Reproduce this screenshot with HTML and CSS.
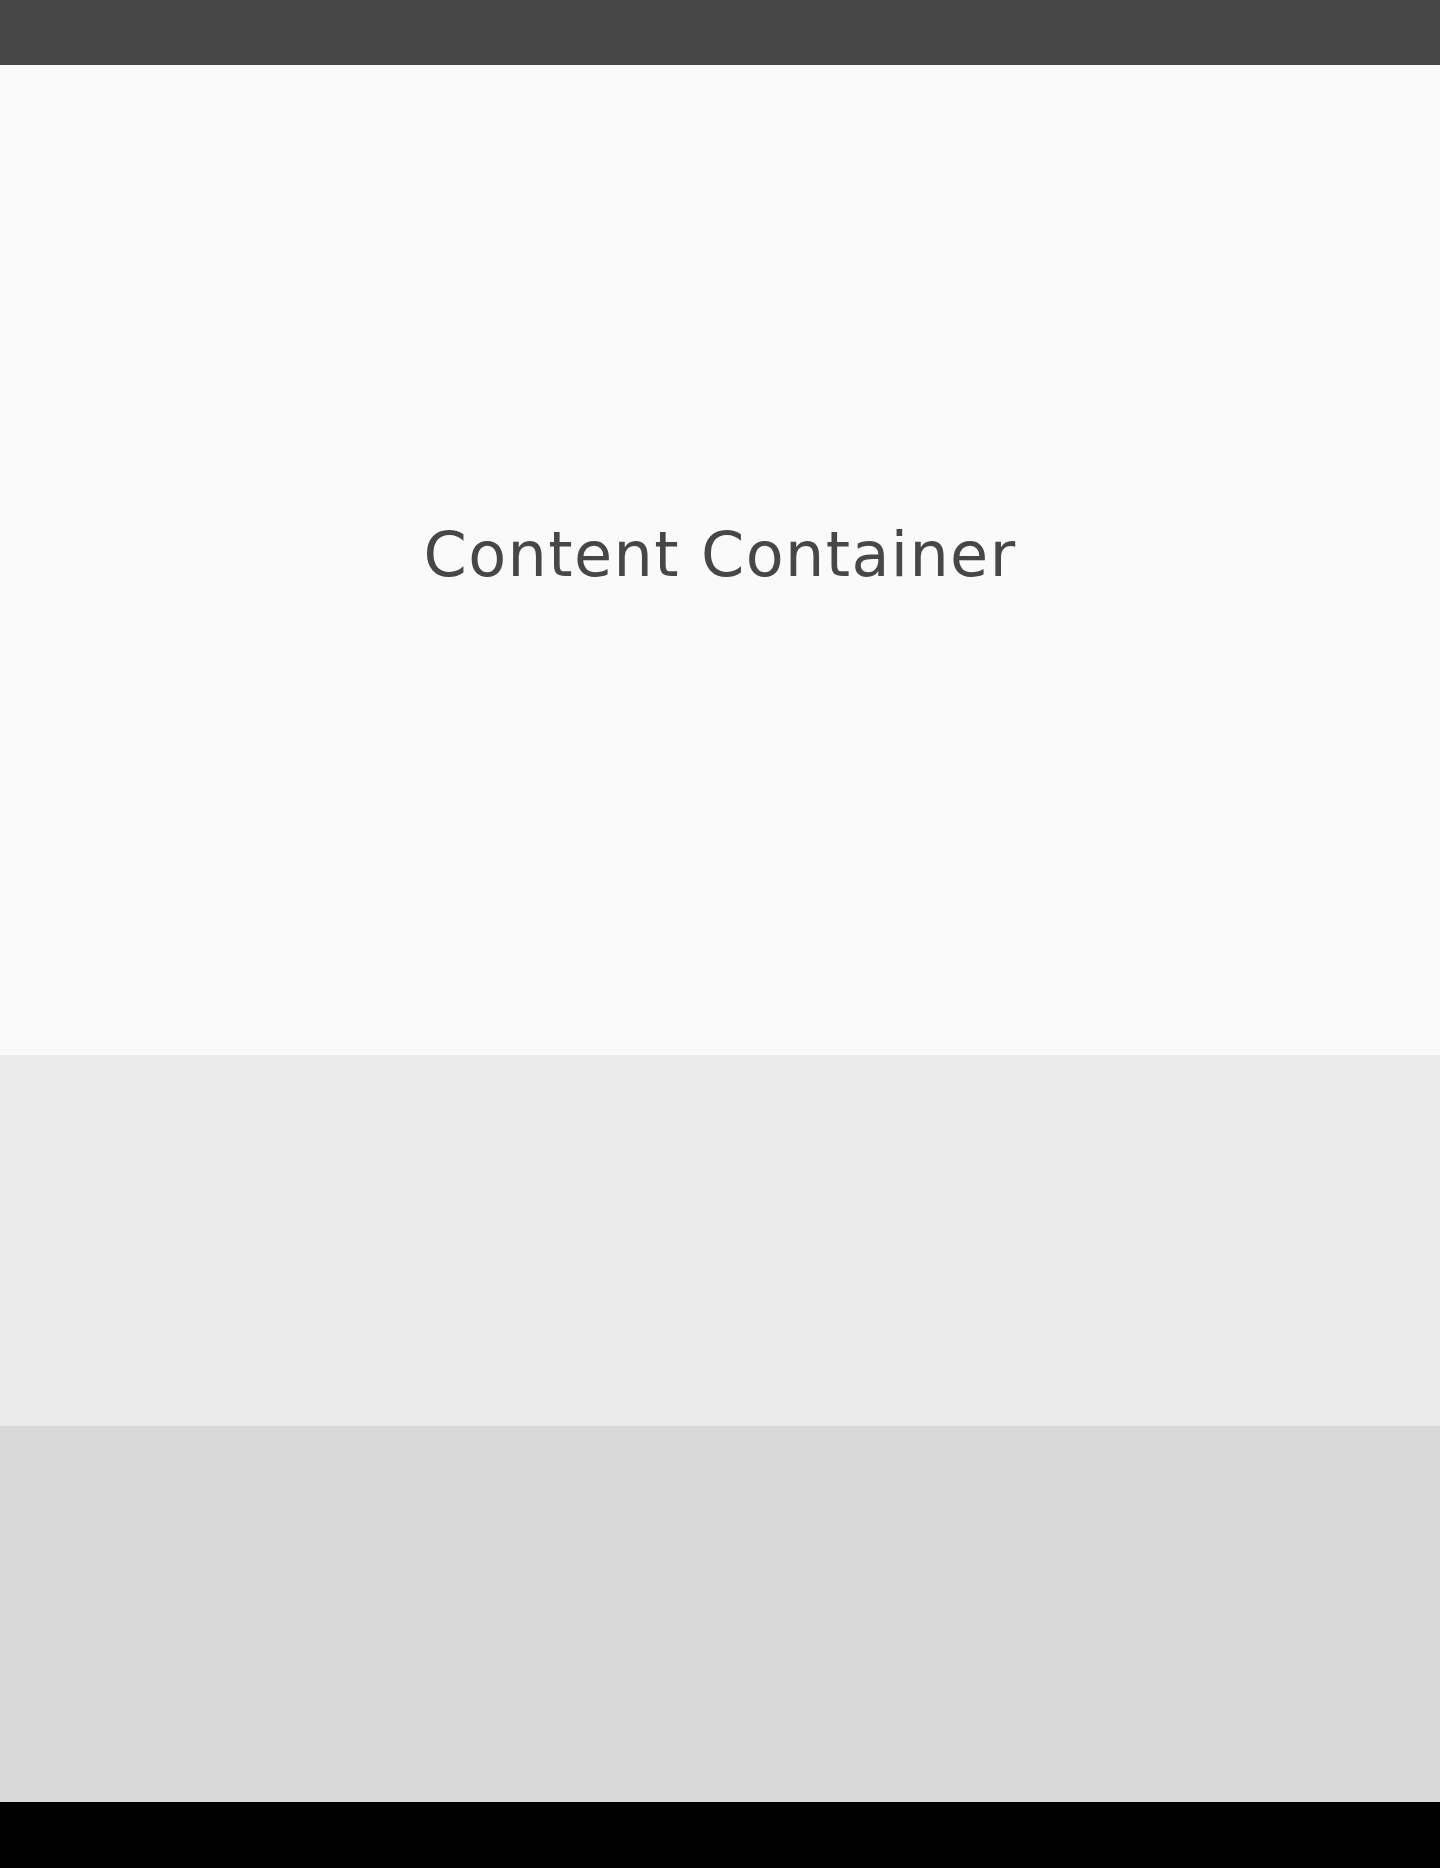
FILE: index.html
```html
<!DOCTYPE html>
<html lang="en">
<head>
<meta charset="utf-8">
<title>Content Container</title>
<link rel="stylesheet" href="styles.css">
</head>
<body>
<div class="page">
  <header class="site-header"></header>
  <main class="content">
    <h1 class="content-title">Content Container</h1>
  </main>
  <section class="band band-light"></section>
  <section class="band band-mid"></section>
  <footer class="site-footer"></footer>
</div>
</body>
</html>
```

FILE: styles.css
```css
html, body {
  margin: 0;
  padding: 0;
}
body {
  font-family: "DejaVu Sans", "Open Sans", sans-serif;
  background: #fafafa;
}
.page {
  display: flex;
  flex-direction: column;
  min-height: 1868px;
}
.site-header {
  height: 65px;
  background: #474747;
}
.content {
  box-sizing: border-box;
  height: 990px;
  padding-bottom: 10px;
  background: #fafafa;
  display: flex;
  align-items: center;
  justify-content: center;
}
.content-title {
  margin: 0;
  font-size: 62px;
  font-weight: 400;
  letter-spacing: 1.4px;
  color: #474747;
  line-height: 1;
}
.band {
  flex: none;
}
.band-light {
  height: 371px;
  background: #ebebeb;
}
.band-mid {
  height: 376px;
  background: #d9d9d9;
}
.site-footer {
  height: 66px;
  background: #000000;
}
```
